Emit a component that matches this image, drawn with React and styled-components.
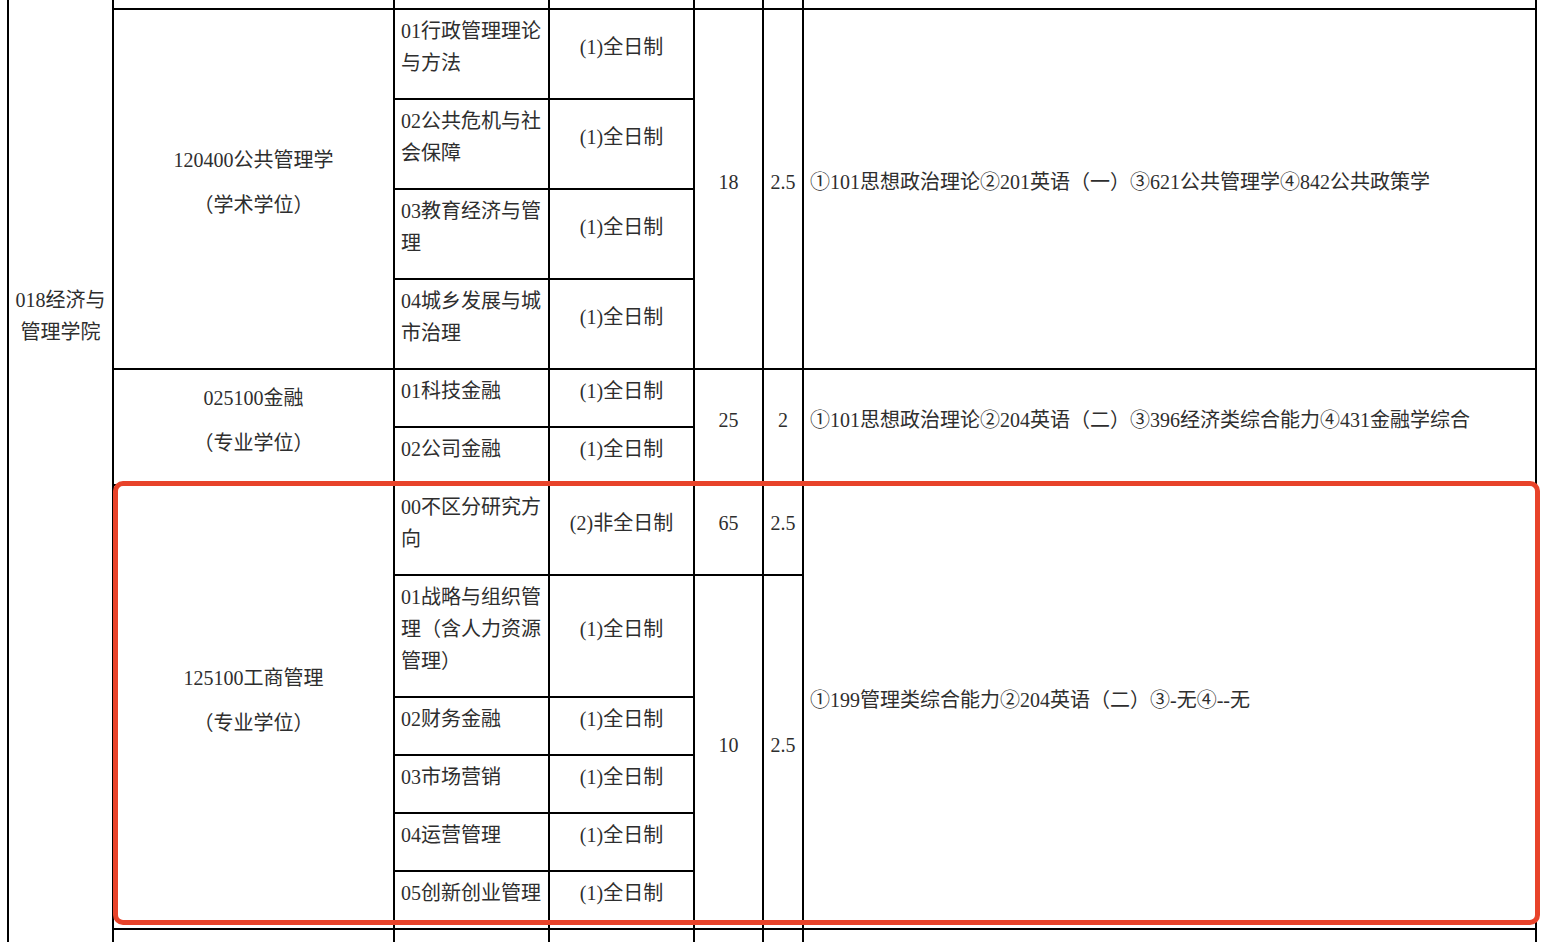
import React from 'react'
import styled, { createGlobalStyle } from 'styled-components'

const GlobalStyle = createGlobalStyle`
  html, body {
    margin: 0;
    padding: 0;
    background: #fff;
  }
`

const Page = styled.div`
  height: 942px;
  overflow: hidden;
  background: #fff;
`

const Table = styled.table`
  border-collapse: collapse;
  table-layout: fixed;
  width: 1528px;
  margin: -342px 0 0 7px;
  font-family: "Liberation Serif", "Noto Sans CJK SC", serif;
  font-size: 20px;
  line-height: 32px;
  color: #2e2e2e;
`

const Cell = styled.td`
  border: 2px solid #000;
  padding: 5px ${(p) => (p.$narrow ? 2 : 6)}px 19px;
  vertical-align: middle;
  text-align: ${(p) => p.$align || 'center'};
  word-break: break-all;
`

const MajorCell = styled(Cell)`
  position: relative;
`

const Major = styled.div`
  & + & {
    margin-top: 13px;
  }
`

const Highlight = styled.div`
  position: absolute;
  top: -5px;
  left: -1px;
  bottom: 3px;
  width: 1427px;
  border: 5px solid #e8432a;
  border-radius: 10px;
  box-sizing: border-box;
  pointer-events: none;
`

const SpacerRow = styled.tr`
  height: ${(p) => p.$h}px;
`

const FULL = '(1)全日制'

const groups = [
  {
    major: ['120400公共管理学', '（学术学位）'],
    exam: '①101思想政治理论②201英语（一）③621公共管理学④842公共政策学',
    rows: [
      { dir: '01行政管理理论与方法', mode: FULL, quota: ['18', '2.5', 4] },
      { dir: '02公共危机与社会保障', mode: FULL },
      { dir: '03教育经济与管理', mode: FULL },
      { dir: '04城乡发展与城市治理', mode: FULL },
    ],
  },
  {
    major: ['025100金融', '（专业学位）'],
    exam: '①101思想政治理论②204英语（二）③396经济类综合能力④431金融学综合',
    rows: [
      { dir: '01科技金融', mode: FULL, quota: ['25', '2', 2] },
      { dir: '02公司金融', mode: FULL },
    ],
  },
  {
    major: ['125100工商管理', '（专业学位）'],
    exam: '①199管理类综合能力②204英语（二）③-无④--无',
    marked: true,
    rows: [
      { dir: '00不区分研究方向', mode: '(2)非全日制', quota: ['65', '2.5', 1] },
      { dir: '01战略与组织管理（含人力资源管理）', mode: FULL, quota: ['10', '2.5', 5] },
      { dir: '02财务金融', mode: FULL },
      { dir: '03市场营销', mode: FULL },
      { dir: '04运营管理', mode: FULL },
      { dir: '05创新创业管理', mode: FULL },
    ],
  },
]

const totalRows = groups.reduce((n, g) => n + g.rows.length, 0) + 2

const EmptyCells = () => (
  <>
    <Cell />
    <Cell />
    <Cell />
    <Cell />
    <Cell />
    <Cell />
    <Cell />
  </>
)

export default function App() {
  return (
    <Page>
      <GlobalStyle />
      <Table>
        <colgroup>
          <col style={{ width: 105 }} />
          <col style={{ width: 281 }} />
          <col style={{ width: 155 }} />
          <col style={{ width: 145 }} />
          <col style={{ width: 69 }} />
          <col style={{ width: 40 }} />
          <col style={{ width: 733 }} />
        </colgroup>
        <tbody>
          <SpacerRow $h={350}>
            <Cell rowSpan={totalRows}>018经济与管理学院</Cell>
            <EmptyCells />
          </SpacerRow>
          {groups.map((g) =>
            g.rows.map((r, i) => (
              <tr key={g.major[0] + i}>
                {i === 0 && (
                  <MajorCell rowSpan={g.rows.length}>
                    {g.major.map((m) => (
                      <Major key={m}>{m}</Major>
                    ))}
                    {g.marked && <Highlight />}
                  </MajorCell>
                )}
                <Cell $align="left">{r.dir}</Cell>
                <Cell>{r.mode}</Cell>
                {r.quota && (
                  <>
                    <Cell rowSpan={r.quota[2]}>{r.quota[0]}</Cell>
                    <Cell $narrow rowSpan={r.quota[2]}>{r.quota[1]}</Cell>
                  </>
                )}
                {i === 0 && (
                  <Cell $align="left" rowSpan={g.rows.length}>
                    {g.exam}
                  </Cell>
                )}
              </tr>
            ))
          )}
          <SpacerRow $h={58}>
            <Cell />
            <Cell />
            <Cell />
            <Cell />
            <Cell $narrow />
            <Cell />
          </SpacerRow>
        </tbody>
      </Table>
    </Page>
  )
}
